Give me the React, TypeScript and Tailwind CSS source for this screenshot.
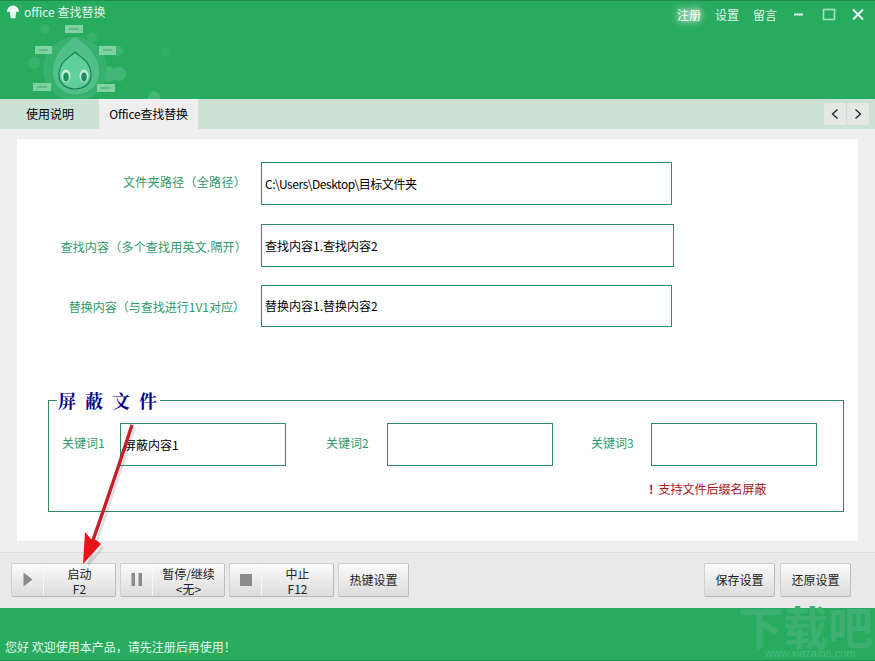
import React from "react";

const FONT = { fontFamily: '"Noto Sans CJK SC", "Liberation Sans", sans-serif' };

function Mascot() {
  return (
    <svg width="145" height="77" viewBox="28 22 145 77" className="block ml-[28px]">
      <circle cx="45" cy="29" r="5" fill="#36b16c" />
      <circle cx="92" cy="37" r="5" fill="#39b26e" />
      <circle cx="34" cy="63" r="6" fill="#38b26d" />
      <circle cx="118" cy="51" r="5" fill="#3db470" />
      <circle cx="165" cy="52" r="5" fill="#2fae66" />
      <circle cx="108" cy="74" r="8" fill="#44b878" />
      <circle cx="119" cy="74" r="7" fill="#44b878" />
      <circle cx="154" cy="97" r="6" fill="#44b878" />
      <circle cx="75" cy="69" r="32" fill="#37b26e" />
      <path d="M75 37 C64 44 53 56 53 72 C53 86 63 94 76 94 C89 94 99 86 99 72 C99 56 86 44 75 37Z" fill="#50c088" />
      <path d="M75 52 C67 59 60 62 59 73 C58 83 66 89 75 89 C84 89 92 83 91 73 C90 62 83 59 75 52Z" fill="#5fcf9b" stroke="#167a55" strokeWidth="1.1" />
      <ellipse cx="66" cy="76" rx="4.5" ry="6.5" fill="#c6efdb" />
      <ellipse cx="84" cy="76" rx="4.5" ry="6.5" fill="#c6efdb" />
      <ellipse cx="66" cy="77" rx="2.8" ry="4.6" fill="#1f8f62" />
      <ellipse cx="84" cy="77" rx="2.8" ry="4.6" fill="#1f8f62" />
      <g fill="#7fd3a2">
        <rect x="65" y="25" width="18" height="8" />
        <rect x="35" y="46" width="17" height="8" />
        <rect x="99" y="46" width="17" height="9" />
        <rect x="33" y="83" width="18" height="8" />
        <rect x="97" y="84" width="18" height="8" />
      </g>
      <g stroke="#469f70" strokeWidth="1">
        <line x1="69" y1="29" x2="79" y2="29" />
        <line x1="39" y1="50" x2="48" y2="50" />
        <line x1="103" y1="50" x2="112" y2="50" />
        <line x1="37" y1="87" x2="47" y2="87" />
        <line x1="101" y1="88" x2="111" y2="88" />
      </g>
    </svg>
  );
}

function Field({ label, value, inputW, h, mt, tight, labelBox }: { label: string; value: string; inputW: string; h: string; mt: string; tight?: boolean; labelBox: string }) {
  return (
    <div className={`flex items-center ${mt}`}>
      <div className={`text-right text-[12px] leading-[18px] text-[#2e9a67] ${labelBox}`}>{label}</div>
      <div className={`${inputW} ${h} border border-[#2e8b62] flex items-center pl-[3px] text-[12px] text-black ${tight ? "tracking-[-0.45px]" : ""}`}>{value}</div>
    </div>
  );
}

function Keyword({ label, value, labelW, className }: { label: string; value?: string; labelW: string; className?: string }) {
  return (
    <div className={`flex items-start ${className ?? ""}`}>
      <div className={`${labelW} text-[12px] leading-[18px] text-[#2e9a67] pt-[11px]`}>{label}</div>
      <div className="w-[166px] h-[43px] border border-[#2e8b62] flex items-center pl-[3px] text-[12px] text-black">{value}</div>
    </div>
  );
}

function RunBtn({ icon, a, b, className }: { icon: React.ReactNode; a: string; b: string; className?: string }) {
  return (
    <div className={`flex w-[105px] h-[34px] rounded-[2px] border border-[#cfcfcf] border-b-[#b5b5b5] border-r-[#bdbdbd] bg-gradient-to-b from-[#fbfbfb] to-[#dcdcdc] ${className ?? ""}`}>
      <div className="w-[32px] flex items-center justify-center border-r border-[#f7f7f7]">{icon}</div>
      <div className="flex-1 flex flex-col items-center justify-center pt-[2px] text-[12px] leading-[15px] text-[#222]">
        <div className="h-[15px]">{a}</div>
        <div className="h-[15px]">{b}</div>
      </div>
    </div>
  );
}

function PlainBtn({ children, className }: { children: React.ReactNode; className?: string }) {
  return (
    <div className={`w-[71px] h-[34px] rounded-[2px] border border-[#cfcfcf] border-b-[#b5b5b5] border-r-[#bdbdbd] bg-gradient-to-b from-[#fbfbfb] to-[#dcdcdc] flex items-center justify-center text-[12px] text-[#222] ${className ?? ""}`}>
      {children}
    </div>
  );
}

export default function App() {
  return (
    <div className="relative w-[875px] h-[661px] overflow-hidden flex flex-col" style={FONT}>
      <header className="h-[99px] bg-[#27ab5f] border-t border-[#1b8a4a] shrink-0 overflow-hidden">
        <div className="h-[21px] flex items-center text-white">
          <svg width="14" height="14" viewBox="0 0 14 14" className="ml-[6px]">
            <path d="M7 0.5 C3.2 0.8 1 3.4 1 7.2 C2 6.6 3 6.6 3.8 7 L4.6 13.2 H9.4 L10.2 7 C11 6.6 12 6.6 13 7.2 C13 3.4 10.8 0.8 7 0.5Z" fill="#eef8f2" />
          </svg>
          <span className="ml-[4px] text-[12px] text-[#e8f7ee]">office 查找替换</span>
          <div className="ml-auto pt-[6px] flex items-center text-[12px] text-[#e6f5ec]">
            <span className="w-[24px] text-white [text-shadow:0_0_6px_#ffffff,0_0_10px_#ffffff]">注册</span>
            <span className="ml-[14px] w-[24px]">设置</span>
            <span className="ml-[14px] w-[24px]">留言</span>
            <svg width="90" height="16" viewBox="0 0 90 16" className="ml-[8px]">
              <rect x="9" y="6.5" width="9" height="2" fill="#e8f7ee" />
              <rect x="38.5" y="2.5" width="11" height="10" fill="none" stroke="#a5e2bf" strokeWidth="1.6" />
              <path d="M68 2.5 L78 12.5 M78 2.5 L68 12.5" stroke="#eefaf3" strokeWidth="2" />
            </svg>
          </div>
        </div>
        <Mascot />
      </header>

      <nav className="h-[30px] bg-[#cbe2d4] flex text-[12px] text-black shrink-0">
        <div className="w-[99px] pl-[26px] flex items-center">使用说明</div>
        <div className="w-[99px] bg-[#efefef] flex items-center justify-center tracking-[-0.2px]">Office查找替换</div>
        <div className="ml-auto mr-[6px] mt-[4px] flex gap-px h-[22px]">
          <div className="w-[22px] bg-[#e4e9e6] rounded-[2px] flex items-center justify-center">
            <svg width="10" height="12" viewBox="0 0 10 12"><path d="M7.5 1.5 L2.5 6 L7.5 10.5" fill="none" stroke="#222" strokeWidth="1.3" /></svg>
          </div>
          <div className="w-[22px] bg-[#e4e9e6] rounded-[2px] flex items-center justify-center">
            <svg width="10" height="12" viewBox="0 0 10 12"><path d="M2.5 1.5 L7.5 6 L2.5 10.5" fill="none" stroke="#222" strokeWidth="1.3" /></svg>
          </div>
        </div>
      </nav>

      <main className="h-[423px] bg-[#efefef] pt-[10px] px-[17px] pb-[11px] shrink-0">
        <div className="h-[402px] bg-white pt-[23px]">
          <Field label="文件夹路径（全路径）" value="C:\Users\Desktop\目标文件夹" inputW="w-[411px]" h="h-[43px]" mt="" tight labelBox="w-[229px] mr-[15px] tracking-[0.3px] pb-[3px]" />
          <Field label="查找内容（多个查找用英文.隔开）" value="查找内容1.查找内容2" inputW="w-[413px]" h="h-[43px]" mt="mt-[19px]" labelBox="w-[230px] mr-[14px] tracking-[0.2px] pt-[2px]" />
          <Field label="替换内容（与查找进行1V1对应）" value="替换内容1.替换内容2" inputW="w-[411px]" h="h-[42px]" mt="mt-[18px]" labelBox="w-[228px] mr-[16px] pt-[2px]" />

          <fieldset className="ml-[31px] mt-[61px] w-[796px] h-[124px] border border-[#2e8b62] pl-[8px] pt-[11px]">
            <legend className="px-[1px] pr-[3px] text-[18px] leading-[24px] font-bold text-[#00008b] tracking-[9px]" style={{ fontFamily: '"Noto Serif CJK SC", "Noto Sans CJK SC", serif' }}>
              屏蔽文<span className="tracking-[0px]">件</span>
            </legend>
            <div className="flex">
              <Keyword label="关键词1" value="屏蔽内容1" labelW="w-[58px]" className="ml-[5px]" />
              <Keyword label="关键词2" labelW="w-[61px]" className="ml-[40px]" />
              <Keyword label="关键词3" labelW="w-[60px]" className="ml-[38px]" />
            </div>
            <div className="mt-[14px] ml-[592px] text-[12px] leading-[18px] text-[#a81414]">
              <b className="mr-[5px]">!</b>支持文件后缀名屏蔽
            </div>
          </fieldset>
        </div>
      </main>

      <section className="h-[56px] bg-[#e9e9e9] border-t border-[#dcdcdc] flex items-center pl-[11px] pr-[24px] pb-[2px] shrink-0">
        <RunBtn a="启动" b="F2" icon={<svg width="10" height="15" viewBox="0 0 10 15"><path d="M0.5 0.5 L9.5 7.5 L0.5 14.5Z" fill="#8a8a8a" /></svg>} />
        <RunBtn className="ml-[4px]" a="暂停/继续" b="<无>" icon={<svg width="12" height="13" viewBox="0 0 12 13"><rect x="0.5" width="3.5" height="13" fill="#8a8a8a" /><rect x="7.5" width="3.5" height="13" fill="#8a8a8a" /></svg>} />
        <RunBtn className="ml-[4px]" a="中止" b="F12" icon={<svg width="12" height="12" viewBox="0 0 12 12"><rect width="12" height="12" fill="#8a8a8a" /></svg>} />
        <PlainBtn className="ml-[4px]">热键设置</PlainBtn>
        <PlainBtn className="ml-auto">保存设置</PlainBtn>
        <PlainBtn className="ml-[5px]">还原设置</PlainBtn>
      </section>

      <footer className="flex-1 bg-[#27ab5f] border-b border-[#1b8a4a] flex items-end pl-[5px] pb-[5px]">
        <span className="text-[12px] leading-[16px] text-[#e8f7ee]">您好 欢迎使用本产品，请先注册后再使用！</span>
      </footer>

      {/* watermark */}
      <div className="absolute left-[738px] top-[604px] w-[137px] pointer-events-none text-[#3db071]">
        <div className="h-[44px] text-[45px] leading-[44px] font-bold whitespace-nowrap">下载吧</div>
        <div className="h-[11px] pl-[27px] text-[11px] leading-[11px] whitespace-nowrap text-[#4db97e]" style={{ fontFamily: '"Liberation Sans", sans-serif' }}>www.xiazaiba.com</div>
      </div>

      {/* annotation arrow */}
      <svg width="875" height="661" viewBox="0 0 875 661" className="absolute left-0 top-0 pointer-events-none">
        <path d="M133 426 L95 540 L86 564 L101 546" fill="none" stroke="#000" strokeOpacity="0.12" strokeWidth="2.5" transform="translate(2 1)" />
        <path d="M132 425 C122 456 108 498 93 540" fill="none" stroke="#c2202a" strokeWidth="3.4" />
        <path d="M83 564 L85 532 L91 539 L96 540 L101 544Z" fill="#e8141c" />
      </svg>
    </div>
  );
}
